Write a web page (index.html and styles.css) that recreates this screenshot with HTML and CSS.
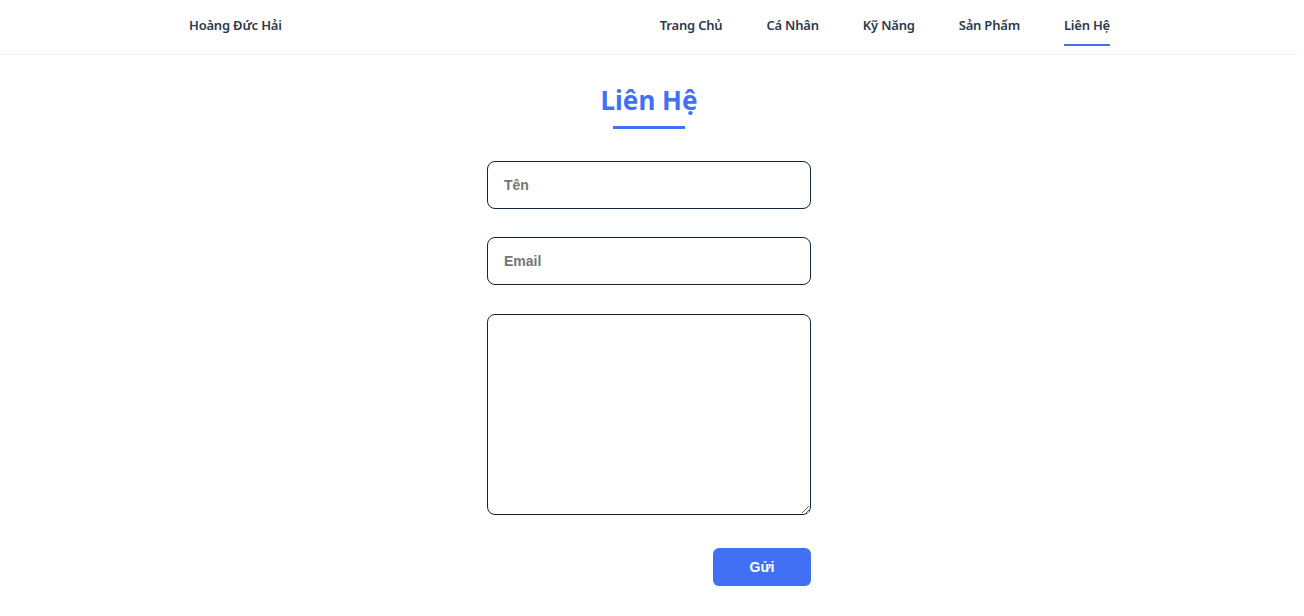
FILE: index.html
```html
<!DOCTYPE html>
<html lang="vi">
<head>
<meta charset="utf-8">
<title>Liên Hệ</title>
<link rel="stylesheet" href="styles.css">
</head>
<body>
<header class="header">
  <div class="container nav-row">
    <a class="brand" href="#">Hoàng Đức Hải</a>
    <nav class="nav">
      <a href="#">Trang Chủ</a>
      <a href="#">Cá Nhân</a>
      <a href="#">Kỹ Năng</a>
      <a href="#">Sản Phẩm</a>
      <a href="#" class="active">Liên Hệ</a>
    </nav>
  </div>
</header>
<main class="contact">
  <h1 class="title">Liên Hệ</h1>
  <form class="form">
    <input class="field" type="text" placeholder="Tên">
    <input class="field" type="email" placeholder="Email">
    <textarea class="field area"></textarea>
    <div class="actions"><button type="button" class="btn">Gửi</button></div>
  </form>
</main>
</body>
</html>
```
FILE: styles.css
```css
* { box-sizing: border-box; }
body {
  margin: 0;
  padding-right: 6px;
  font-family: "Noto Sans", "Open Sans", sans-serif;
  color: #2c3a4b;
  background: #fff;
}
.header {
  height: 55px;
  border-bottom: 1px solid #f1f1f1;
}
.container {
  width: 922px;
  margin: 0 auto;
  padding-left: 1px;
}
.nav-row {
  display: flex;
  align-items: center;
  justify-content: space-between;
  height: 54px;
}
.brand {
  font-size: 13px;
  font-weight: 600;
  color: #2c3a4b;
  text-decoration: none;
  letter-spacing: -0.2px;
  padding-bottom: 4px;
}
.nav {
  display: flex;
  gap: 44px;
  height: 100%;
}
.nav a {
  display: flex;
  align-items: center;
  height: 100%;
  padding-bottom: 4px;
  font-size: 13px;
  font-weight: 600;
  color: #2c3a4b;
  text-decoration: none;
  position: relative;
  letter-spacing: -0.2px;
}
.nav a.active::after {
  content: "";
  position: absolute;
  left: 0;
  right: 0;
  top: 44px;
  height: 2px;
  background: #4270f4;
}
.contact {
  display: flex;
  flex-direction: column;
  align-items: center;
}
.title {
  margin: 28px 0 0;
  font-size: 26px;
  font-weight: 700;
  color: #4270f4;
  line-height: 34px;
  position: relative;
  padding-bottom: 12px;
}
.title::after {
  content: "";
  position: absolute;
  left: 50%;
  bottom: 0;
  width: 72px;
  margin-left: -36px;
  height: 3px;
  background: #4270f4;
}
.form {
  width: 324px;
  margin-top: 32px;
  display: flex;
  flex-direction: column;
}
.field {
  display: block;
  width: 100%;
  height: 48px;
  border: 1px solid #13253a;
  border-radius: 8px;
  padding: 0 16px;
  font-family: "Liberation Sans", Arial, sans-serif;
  font-size: 14px;
  font-weight: 700;
  color: #333;
  margin-bottom: 28px;
  outline: none;
}
.field::placeholder { color: #757575; }
.area {
  height: 201px;
  margin-top: 1px;
  margin-bottom: 33px;
  resize: vertical;
}
.actions {
  display: flex;
  justify-content: flex-end;
}
.btn {
  width: 98px;
  height: 38px;
  border: none;
  border-radius: 6px;
  background: #4270f4;
  color: #fff;
  font-family: "Liberation Sans", Arial, sans-serif;
  font-size: 14px;
  font-weight: 700;
  cursor: pointer;
}
```
